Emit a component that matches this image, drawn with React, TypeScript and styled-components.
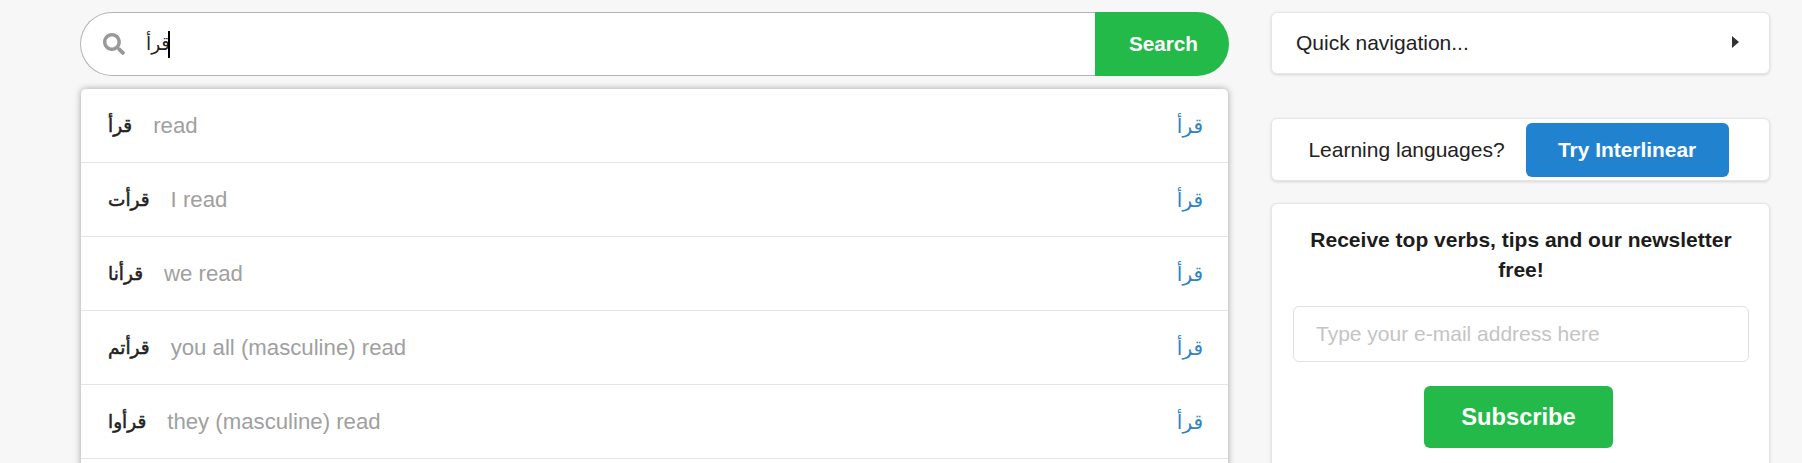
import { FaSearch } from "react-icons/fa";
import styled, { createGlobalStyle } from "styled-components";

const GlobalStyle = createGlobalStyle`
  html, body {
    margin: 0;
    height: 100%;
    background: #f7f7f7;
    overflow: hidden;
  }

  * {
    box-sizing: border-box;
  }
`;

const FONT = `"Liberation Sans", "DejaVu Sans", Arial, sans-serif`;

const Page = styled.div`
  display: flex;
  gap: 42px;
  height: 463px;
  padding: 12px 0 0 80px;
  overflow: hidden;
  font-family: ${FONT};
  font-size: 21px;
  color: #222;
`;

const Main = styled.div`
  width: 1149px;
  flex: none;
`;

const SearchBar = styled.div`
  display: flex;
  height: 64px;
  margin-bottom: 13px;
`;

const SearchField = styled.div`
  flex: 1;
  display: flex;
  align-items: center;
  padding-left: 22px;
  background: #fff;
  border: 1px solid #b3b3b3;
  border-right: none;
  border-radius: 32px 0 0 32px;
`;

const SearchIcon = styled(FaSearch)`
  width: 22px;
  height: 22px;
  color: #999;
  margin-right: 21px;
`;

const Typed = styled.span`
  font-size: 18.5px;
  color: #222;
`;

const Caret = styled.span`
  width: 2px;
  height: 27px;
  margin-left: -2px;
  background: #000;
`;

const SearchButton = styled.button`
  width: 134px;
  padding: 0 0 0 3px;
  border: none;
  border-radius: 0 32px 32px 0;
  background: #23ba4a;
  color: #fff;
  font-family: ${FONT};
  font-size: 20.7px;
  font-weight: 700;
`;

const Dropdown = styled.ul`
  height: 400px;
  margin: 0 1px;
  padding: 0;
  list-style: none;
  background: #fff;
  border-radius: 5px 5px 0 0;
  box-shadow: 0 0 7px rgba(0, 0, 0, 0.35);
`;

const Row = styled.li`
  display: flex;
  align-items: center;
  height: 74px;
  padding: 0 25px 0 27px;
  border-bottom: 1px solid #e4e4e4;
`;

const Word = styled.span`
  font-size: 18.5px;
  -webkit-text-stroke: 0.5px #222;
  color: #222;
  margin-right: 21px;
`;

const Meaning = styled.span`
  flex: 1;
  font-size: 22.2px;
  color: #a0a0a0;
`;

const Root = styled.span`
  font-size: 20px;
  color: #2f83c5;
`;

const Side = styled.aside`
  width: 499px;
  flex: none;
`;

const Card = styled.div`
  background: #fff;
  border: 1px solid #e6e6e6;
  border-radius: 6px;
  box-shadow: 0 1px 3px rgba(0, 0, 0, 0.14);
`;

const QuickNav = styled(Card)`
  display: flex;
  align-items: center;
  justify-content: space-between;
  height: 62px;
  padding: 0 30px 0 24px;
  margin-bottom: 44px;
`;

const Triangle = styled.span`
  width: 0;
  height: 0;
  margin-bottom: 2px;
  border-left: 7px solid #333;
  border-top: 6px solid transparent;
  border-bottom: 6px solid transparent;
`;

const LearnCard = styled(Card)`
  display: flex;
  align-items: center;
  justify-content: center;
  gap: 21px;
  height: 63px;
  padding-right: 4px;
  margin-bottom: 22px;
`;

const TryButton = styled.button`
  width: 203px;
  height: 54px;
  border: none;
  border-radius: 6px;
  background: #2183d0;
  color: #fff;
  font-family: ${FONT};
  font-size: 20.9px;
  font-weight: 700;
`;

const Newsletter = styled(Card)`
  display: flex;
  flex-direction: column;
  align-items: center;
  height: 320px;
  padding: 21px 20px 0 21px;
`;

const Heading = styled.div`
  font-weight: 700;
  font-size: 21px;
  line-height: 30px;
  text-align: center;
  margin-bottom: 21px;
  color: #1c1c1c;
`;

const EmailInput = styled.input`
  width: 100%;
  height: 56px;
  padding: 0 22px;
  border: 1px solid #e0e0e0;
  border-radius: 6px;
  font-family: ${FONT};
  font-size: 21px;
  outline: none;

  &::placeholder {
    color: #c4c4c4;
    opacity: 1;
  }
`;

const SubscribeButton = styled.button`
  width: 189px;
  height: 62px;
  margin-top: 24px;
  margin-right: 5px;
  border: none;
  border-radius: 6px;
  background: #23ba4a;
  color: #fff;
  font-family: ${FONT};
  font-size: 23.7px;
  font-weight: 700;
`;

const conjugations = [
  { word: "قرأ", meaning: "read" },
  { word: "قرأت", meaning: "I read" },
  { word: "قرأنا", meaning: "we read" },
  { word: "قرأتم", meaning: "you all (masculine) read" },
  { word: "قرأوا", meaning: "they (masculine) read" },
];

export default function App() {
  return (
    <>
      <GlobalStyle />
      <Page>
        <Main>
          <SearchBar>
            <SearchField>
              <SearchIcon />
              <Typed>قرأ</Typed>
              <Caret />
            </SearchField>
            <SearchButton>Search</SearchButton>
          </SearchBar>
          <Dropdown>
            {conjugations.map((c) => (
              <Row key={c.meaning}>
                <Word>{c.word}</Word>
                <Meaning>{c.meaning}</Meaning>
                <Root>قرأ</Root>
              </Row>
            ))}
          </Dropdown>
        </Main>
        <Side>
          <QuickNav>
            <span>Quick navigation...</span>
            <Triangle />
          </QuickNav>
          <LearnCard>
            <span>Learning languages?</span>
            <TryButton>Try Interlinear</TryButton>
          </LearnCard>
          <Newsletter>
            <Heading>Receive top verbs, tips and our newsletter free!</Heading>
            <EmailInput placeholder="Type your e-mail address here" />
            <SubscribeButton>Subscribe</SubscribeButton>
          </Newsletter>
        </Side>
      </Page>
    </>
  );
}
